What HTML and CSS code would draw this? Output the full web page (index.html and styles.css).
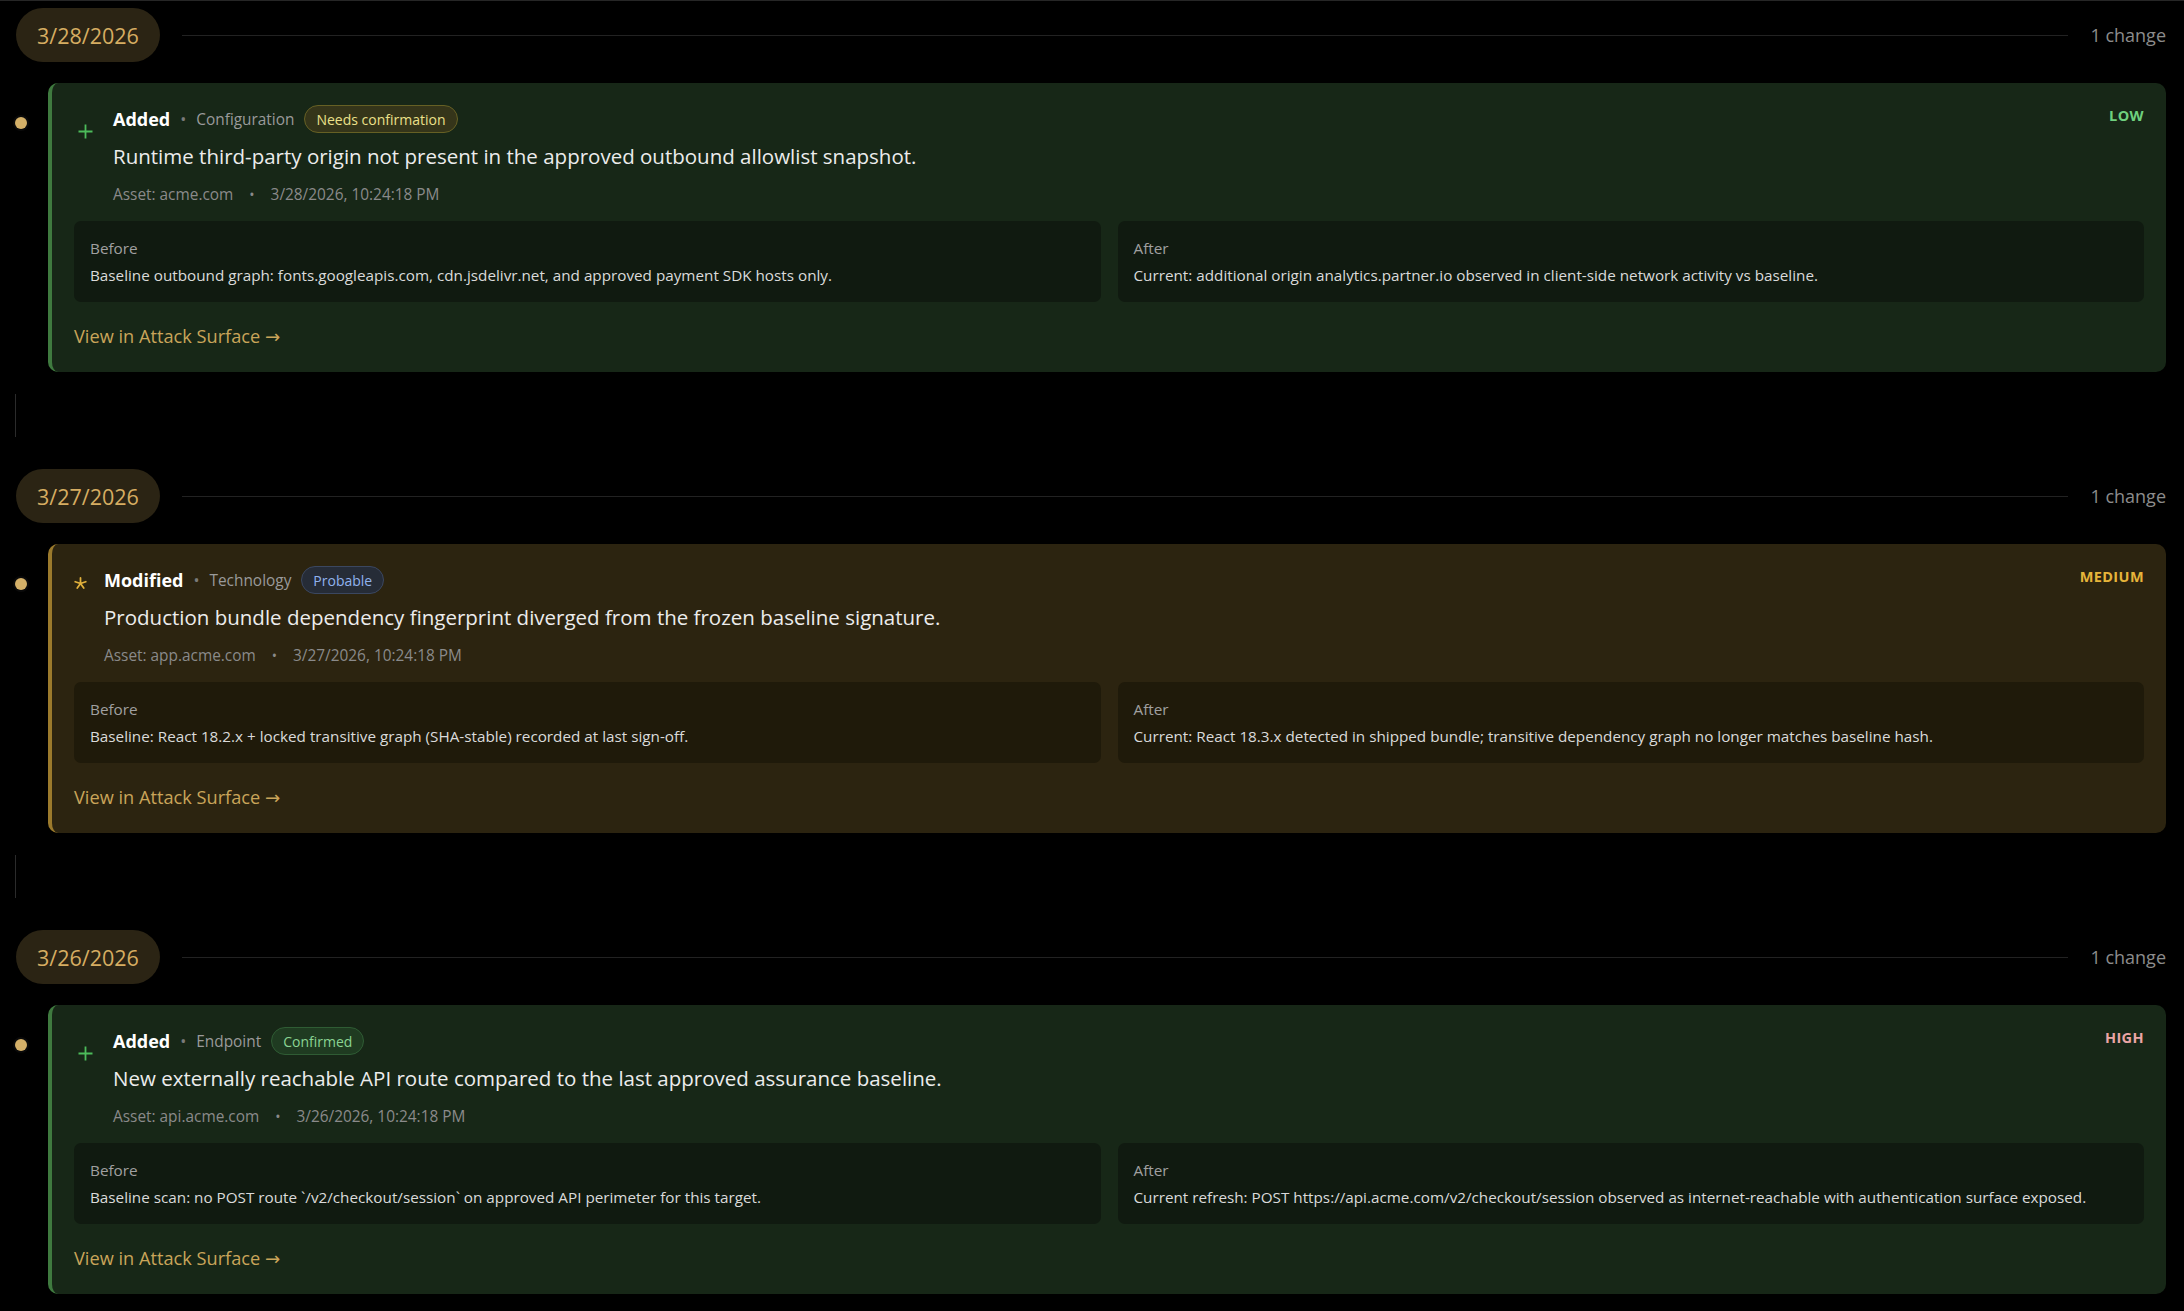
FILE: index.html
```html
<!DOCTYPE html>
<html lang="en">
<head>
<meta charset="utf-8">
<title>Change timeline</title>
<link rel="stylesheet" href="styles.css">
</head>
<body>
<div class="page">

  <section class="day">
    <div class="day-head">
      <span class="date-pill">3/28/2026</span>
      <span class="day-rule"></span>
      <span class="day-count">1 change</span>
    </div>
    <article class="card card-added">
      <span class="tl-dot"></span>
      <div class="card-top">
        <span class="change-icon icon-plus"><svg viewBox="0 0 15 15" width="15" height="15"><path d="M7.5 0.5v14M0.5 7.5h14" stroke="currentColor" stroke-width="1.8" fill="none"/></svg></span>
        <div class="card-main">
          <div class="card-head">
            <span class="kind">Added</span>
            <span class="sep">•</span>
            <span class="category">Configuration</span>
            <span class="badge badge-needs">Needs confirmation</span>
          </div>
          <h3 class="card-title">Runtime third-party origin not present in the approved outbound allowlist snapshot.</h3>
          <div class="card-meta">
            <span>Asset: acme.com</span>
            <span class="sep">•</span>
            <span>3/28/2026, 10:24:18 PM</span>
          </div>
        </div>
        <span class="severity sev-low">LOW</span>
      </div>
      <div class="diff">
        <div class="diff-box">
          <div class="diff-label">Before</div>
          <div class="diff-text">Baseline outbound graph: fonts.googleapis.com, cdn.jsdelivr.net, and approved payment SDK hosts only.</div>
        </div>
        <div class="diff-box">
          <div class="diff-label">After</div>
          <div class="diff-text">Current: additional origin analytics.partner.io observed in client-side network activity vs baseline.</div>
        </div>
      </div>
      <a class="card-link" href="#">View in Attack Surface →</a>
    </article>
    <div class="connector"></div>
  </section>

  <section class="day">
    <div class="day-head">
      <span class="date-pill">3/27/2026</span>
      <span class="day-rule"></span>
      <span class="day-count">1 change</span>
    </div>
    <article class="card card-modified">
      <span class="tl-dot"></span>
      <div class="card-top">
        <span class="change-icon icon-star"><svg viewBox="0 0 14 14" width="13" height="13"><path d="M7 1v6M7 7L12.7 5.1M7 7l3.5 4.9M7 7l-3.5 4.9M7 7L1.3 5.1" stroke="currentColor" stroke-width="1.9" stroke-linecap="round" fill="none"/></svg></span>
        <div class="card-main">
          <div class="card-head">
            <span class="kind">Modified</span>
            <span class="sep">•</span>
            <span class="category">Technology</span>
            <span class="badge badge-probable">Probable</span>
          </div>
          <h3 class="card-title">Production bundle dependency fingerprint diverged from the frozen baseline signature.</h3>
          <div class="card-meta">
            <span>Asset: app.acme.com</span>
            <span class="sep">•</span>
            <span>3/27/2026, 10:24:18 PM</span>
          </div>
        </div>
        <span class="severity sev-medium">MEDIUM</span>
      </div>
      <div class="diff">
        <div class="diff-box">
          <div class="diff-label">Before</div>
          <div class="diff-text">Baseline: React 18.2.x + locked transitive graph (SHA-stable) recorded at last sign-off.</div>
        </div>
        <div class="diff-box">
          <div class="diff-label">After</div>
          <div class="diff-text">Current: React 18.3.x detected in shipped bundle; transitive dependency graph no longer matches baseline hash.</div>
        </div>
      </div>
      <a class="card-link" href="#">View in Attack Surface →</a>
    </article>
    <div class="connector"></div>
  </section>

  <section class="day">
    <div class="day-head">
      <span class="date-pill">3/26/2026</span>
      <span class="day-rule"></span>
      <span class="day-count">1 change</span>
    </div>
    <article class="card card-added">
      <span class="tl-dot"></span>
      <div class="card-top">
        <span class="change-icon icon-plus"><svg viewBox="0 0 15 15" width="15" height="15"><path d="M7.5 0.5v14M0.5 7.5h14" stroke="currentColor" stroke-width="1.8" fill="none"/></svg></span>
        <div class="card-main">
          <div class="card-head">
            <span class="kind">Added</span>
            <span class="sep">•</span>
            <span class="category">Endpoint</span>
            <span class="badge badge-confirmed">Confirmed</span>
          </div>
          <h3 class="card-title">New externally reachable API route compared to the last approved assurance baseline.</h3>
          <div class="card-meta">
            <span>Asset: api.acme.com</span>
            <span class="sep">•</span>
            <span>3/26/2026, 10:24:18 PM</span>
          </div>
        </div>
        <span class="severity sev-high">HIGH</span>
      </div>
      <div class="diff">
        <div class="diff-box">
          <div class="diff-label">Before</div>
          <div class="diff-text">Baseline scan: no POST route `/v2/checkout/session` on approved API perimeter for this target.</div>
        </div>
        <div class="diff-box">
          <div class="diff-label">After</div>
          <div class="diff-text">Current refresh: POST https://api.acme.com/v2/checkout/session observed as internet-reachable with authentication surface exposed.</div>
        </div>
      </div>
      <a class="card-link" href="#">View in Attack Surface →</a>
    </article>
  </section>

</div>
</body>
</html>
```

FILE: styles.css
```css
html, body {
  margin: 0;
  padding: 0;
  background: #000;
}

body {
  font-family: "Open Sans", "Noto Sans", "DejaVu Sans", sans-serif;
  color: #e6e6e6;
}

.page {
  border-top: 1px solid #262626;
  padding: 7px 18px 0 16px;
}

.day-head {
  display: flex;
  align-items: center;
  height: 54px;
}

.date-pill {
  display: inline-flex;
  align-items: center;
  height: 54px;
  padding: 0 21px;
  border-radius: 27px;
  background: #2b2414;
  color: #d6ad62;
  font-size: 21.5px;
  box-sizing: border-box;
}

.day-rule {
  flex: 1;
  height: 1px;
  background: #222;
  margin: 0 22px 0 22px;
}

.day-count {
  color: #8c8c8c;
  font-size: 18px;
}

.card {
  position: relative;
  margin: 21px 0 0 32px;
  padding: 22px 22px 24px 22px;
  border-radius: 10px;
  border-left: 4px solid #3f7a3f;
}

.card-added {
  background: #172717;
}

.card-modified {
  background: #2c2410;
  border-left-color: #9b7a2c;
}

.tl-dot {
  position: absolute;
  left: -37px;
  top: 34px;
  width: 12px;
  height: 12px;
  border-radius: 50%;
  background: #d4b068;
  box-shadow: 0 0 0 2px #0a0a0a;
}

.card-top {
  display: flex;
  align-items: flex-start;
}

.change-icon {
  display: flex;
  flex: none;
}

.icon-plus {
  color: #4cbb5a;
  margin: 19px 20px 0 4px;
}

.icon-star {
  color: #e2b13c;
  margin: 11px 17px 0 0;
}

.card-main {
  flex: 1;
  min-width: 0;
}

.card-head {
  display: flex;
  align-items: center;
  gap: 10px;
  height: 28px;
}

.kind {
  font-weight: 700;
  font-size: 18px;
  color: #fff;
}

.sep {
  color: #7a7a7a;
  font-size: 16px;
}

.category {
  color: #9a9a9a;
  font-size: 15.4px;
}

.badge {
  display: inline-flex;
  align-items: center;
  height: 28px;
  box-sizing: border-box;
  padding: 0 11px;
  border-radius: 14px;
  border: 1px solid;
  font-size: 14px;
}

.badge-needs {
  background: #35351a;
  border-color: #666024;
  color: #ebe08a;
}

.badge-probable {
  background: #262c37;
  border-color: #3b4760;
  color: #90b2ee;
}

.badge-confirmed {
  background: #1f3b21;
  border-color: #2f5c34;
  color: #8ad493;
}

.card-title {
  margin: 9px 0 0;
  font-weight: 400;
  font-size: 20.5px;
  line-height: 28px;
  color: #ececec;
}

.card-meta {
  display: flex;
  align-items: center;
  gap: 16px;
  margin-top: 15px;
  font-size: 15.4px;
  line-height: 20px;
  color: #8a8a8a;
}

.card-meta .sep {
  color: #8a8a8a;
  font-size: 14px;
}

.severity {
  flex: none;
  margin-top: 1px;
  font-weight: 700;
  font-size: 14.5px;
  line-height: 20px;
  letter-spacing: 0.4px;
}

.sev-low { color: #6fd07e; }
.sev-medium { color: #e6b43a; }
.sev-high { color: #eba5a5; }

.diff {
  display: grid;
  grid-template-columns: 1fr 1fr;
  gap: 17px;
  margin-top: 16px;
}

.diff-box {
  padding: 17px 16px;
  border-radius: 7px;
  background: #101a10;
}

.card-modified .diff-box {
  background: #1f1a0a;
}

.diff-label {
  font-size: 15.3px;
  line-height: 20px;
  color: #a0a0a0;
  margin-bottom: 7px;
}

.diff-text {
  font-size: 15.25px;
  line-height: 20px;
  color: #dadada;
}

.card-link {
  display: inline-block;
  margin-top: 22px;
  font-size: 18.2px;
  line-height: 24px;
  color: #c9a55a;
  text-decoration: none;
}

.connector {
  width: 1px;
  height: 43px;
  margin: 22px 0 32px -1px;
  background: #2b2b2b;
}
```
